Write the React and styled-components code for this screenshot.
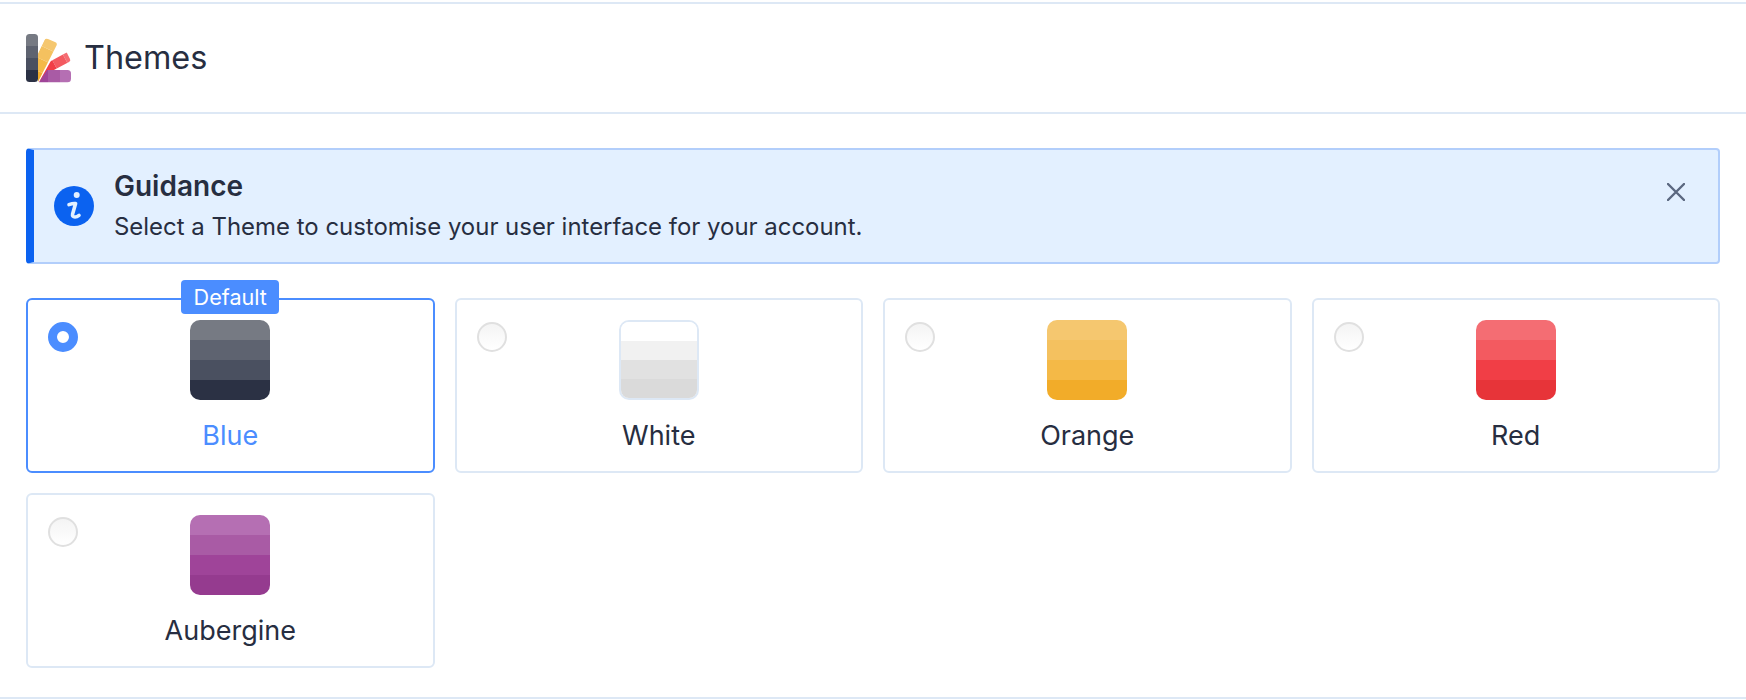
import React from "react";
import styled, { createGlobalStyle } from "styled-components";

const GlobalStyle = createGlobalStyle`
  html, body {
    margin: 0;
    padding: 0;
    background: #fff;
    font-family: Inter, "Liberation Sans", sans-serif;
    color: #272e41;
  }
`;

const Page = styled.div`
  width: 1746px;
  height: 700px;
  box-sizing: border-box;
  padding-top: 2px;
  overflow: hidden;
`;

const Section = styled.section`
  border-top: 2px solid #dde8f5;
  border-bottom: 2px solid #dde8f5;
  height: 697px;
  box-sizing: border-box;
`;

const Header = styled.header`
  height: 110px;
  box-sizing: border-box;
  display: flex;
  align-items: center;
  gap: 12px;
  padding-left: 26px;
  border-bottom: 2px solid #dde8f5;
`;

const Title = styled.h1`
  margin: 0;
  font-size: 32.4px;
  font-weight: 400;
  line-height: 36px;
  color: #272e41;
`;

const Body = styled.div`
  padding: 34px 26px 0;
`;

const Alert = styled.div`
  height: 116px;
  box-sizing: border-box;
  display: flex;
  align-items: center;
  background: #e3f0ff;
  border: 2px solid #b2cefb;
  border-left: 8px solid #0b62f0;
  border-radius: 4px;
  padding-left: 20px;
  padding-right: 30px;
`;

const AlertText = styled.div`
  flex: 1;
  margin-left: 20px;
`;

const AlertTitle = styled.div`
  font-size: 28px;
  font-weight: 600;
  line-height: 32px;
  color: #272e41;
`;

const AlertMessage = styled.div`
  font-size: 23.95px;
  line-height: 30px;
  margin-top: 10px;
  color: #272e41;
`;

const CloseButton = styled.button`
  align-self: flex-start;
  margin-top: 30px;
  background: none;
  border: 0;
  padding: 0;
  width: 24px;
  height: 24px;
  display: flex;
  align-items: center;
  justify-content: center;
`;

const Grid = styled.div`
  display: grid;
  grid-template-columns: repeat(4, 1fr);
  gap: 20px;
  margin-top: 34px;
`;

const Card = styled.label`
  position: relative;
  height: 175px;
  box-sizing: border-box;
  border: 2px solid ${(p) => (p.$active ? "#4b8dff" : "#dde8f5")};
  border-radius: 6px;
  display: flex;
  flex-direction: column;
  align-items: center;
  padding-top: 20px;
`;

const Radio = styled.span`
  position: absolute;
  left: 20px;
  top: 22px;
  width: 30px;
  height: 30px;
  box-sizing: border-box;
  border-radius: 50%;
  ${(p) =>
    p.$checked
      ? "border: 9px solid #4b8dff; background: #fff;"
      : "border: 2px solid #e0e0e0; background: linear-gradient(#f4f4f4, #fff);"}
`;

const Badge = styled.span`
  position: absolute;
  top: -20px;
  left: 50%;
  transform: translateX(-50%);
  width: 98px;
  height: 34px;
  display: flex;
  align-items: center;
  justify-content: center;
  background: #4b8dff;
  color: #fff;
  border-radius: 4px;
  font-size: 21.6px;
  line-height: 24px;
`;

const Swatch = styled.span`
  width: 80px;
  height: 80px;
  box-sizing: border-box;
  border-radius: 10px;
  overflow: hidden;
  display: flex;
  flex-direction: column;
  ${(p) => p.$outlined && "border: 2px solid #dde8f5;"}
`;

const Stripe = styled.span`
  flex: 1;
  background: ${(p) => p.$color};
`;

const CardLabel = styled.span`
  margin-top: 18px;
  font-size: 27px;
  line-height: 36px;
  color: ${(p) => (p.$active ? "#4b8dff" : "#272e41")};
`;

const themes = [
  { name: "Blue", stripes: ["#767a83", "#5e6370", "#4a5060", "#2b3144"], checked: true },
  { name: "White", stripes: ["#ffffff", "#f1f1f1", "#e1e1e1", "#dadada"], outlined: true },
  { name: "Orange", stripes: ["#f5c76f", "#f4c15f", "#f4b947", "#f2ac29"] },
  { name: "Red", stripes: ["#f46d73", "#f35a60", "#f13e46", "#e73439"] },
  { name: "Aubergine", stripes: ["#b56fb3", "#a95ba5", "#9f4499", "#953b8f"] },
];

function ThemesLogo() {
  return (
    <svg width="46" height="50" viewBox="0 0 46 50">
      <defs>
        <clipPath id="bar">
          <rect x="0" y="1" width="12" height="48" rx="3.5" />
        </clipPath>
        <clipPath id="leafY">
          <path d="M12 49 L12 20 L18.5 7 Q19.5 5 22 6 L29.5 9.3 Q31.5 10.3 30.5 12.5 Z" />
        </clipPath>
        <clipPath id="leafR">
          <path d="M13 49 L27 24 L38 18.8 Q40 18 41 20 L44 26 Q45 28 43 29 L27 37.5 Z" />
        </clipPath>
        <clipPath id="leafP">
          <path d="M13 49.2 L21 37 L41.5 37 Q45 37 45 40.5 L45 45.7 Q45 49.2 41.5 49.2 Z" />
        </clipPath>
      </defs>
      <g clipPath="url(#leafY)">
        <g transform="rotate(25 12 49)">
          <rect x="0" y="0" width="30" height="15" fill="#f5c76f" />
          <rect x="0" y="15" width="30" height="12" fill="#f4c15f" />
          <rect x="0" y="27" width="30" height="12" fill="#f4b947" />
          <rect x="0" y="39" width="30" height="14" fill="#f2ac29" />
        </g>
      </g>
      <g clipPath="url(#leafR)">
        <g transform="rotate(62 13 49)">
          <rect x="0" y="0" width="30" height="15" fill="#f46d73" />
          <rect x="0" y="15" width="30" height="12" fill="#f35a60" />
          <rect x="0" y="27" width="30" height="26" fill="#f13e46" />
        </g>
      </g>
      <g clipPath="url(#leafP)">
        <rect x="0" y="30" width="22" height="20" fill="#9f4499" />
        <rect x="22" y="30" width="12" height="20" fill="#a95ba5" />
        <rect x="34" y="30" width="12" height="20" fill="#b56fb3" />
      </g>
      <g clipPath="url(#bar)">
        <rect x="0" y="0" width="12" height="13" fill="#767a83" />
        <rect x="0" y="13" width="12" height="12" fill="#5e6370" />
        <rect x="0" y="25" width="12" height="12" fill="#4a5060" />
        <rect x="0" y="37" width="12" height="13" fill="#2b3144" />
      </g>
    </svg>
  );
}

function InfoIcon() {
  return (
    <svg width="40" height="40" viewBox="0 0 40 40">
      <circle cx="20" cy="20" r="20" fill="#0b62f0" />
      <circle cx="22.7" cy="9" r="3" fill="#e3f0ff" />
      <path
        d="M15 18.6 Q19 17.2 21.6 17.6 L18.6 28 Q18 31 21 31 Q23 31 25 29.4"
        fill="none"
        stroke="#e3f0ff"
        strokeWidth="3.6"
        strokeLinecap="round"
        strokeLinejoin="round"
      />
    </svg>
  );
}

function CloseIcon() {
  return (
    <svg width="18" height="18" viewBox="0 0 18 18">
      <path
        d="M1 1 L17 17 M17 1 L1 17"
        stroke="#5b6880"
        strokeWidth="2.4"
        strokeLinecap="round"
        fill="none"
      />
    </svg>
  );
}

export default function App() {
  return (
    <>
      <GlobalStyle />
      <Page>
        <Section>
          <Header>
            <ThemesLogo />
            <Title>Themes</Title>
          </Header>
          <Body>
            <Alert>
              <InfoIcon />
              <AlertText>
                <AlertTitle>Guidance</AlertTitle>
                <AlertMessage>
                  Select a Theme to customise your user interface for your account.
                </AlertMessage>
              </AlertText>
              <CloseButton aria-label="Close">
                <CloseIcon />
              </CloseButton>
            </Alert>
            <Grid>
              {themes.map((theme) => (
                <Card key={theme.name} $active={theme.checked}>
                  <Radio $checked={theme.checked} />
                  {theme.checked && <Badge>Default</Badge>}
                  <Swatch $outlined={theme.outlined}>
                    {theme.stripes.map((color) => (
                      <Stripe key={color} $color={color} />
                    ))}
                  </Swatch>
                  <CardLabel $active={theme.checked}>{theme.name}</CardLabel>
                </Card>
              ))}
            </Grid>
          </Body>
        </Section>
      </Page>
    </>
  );
}
